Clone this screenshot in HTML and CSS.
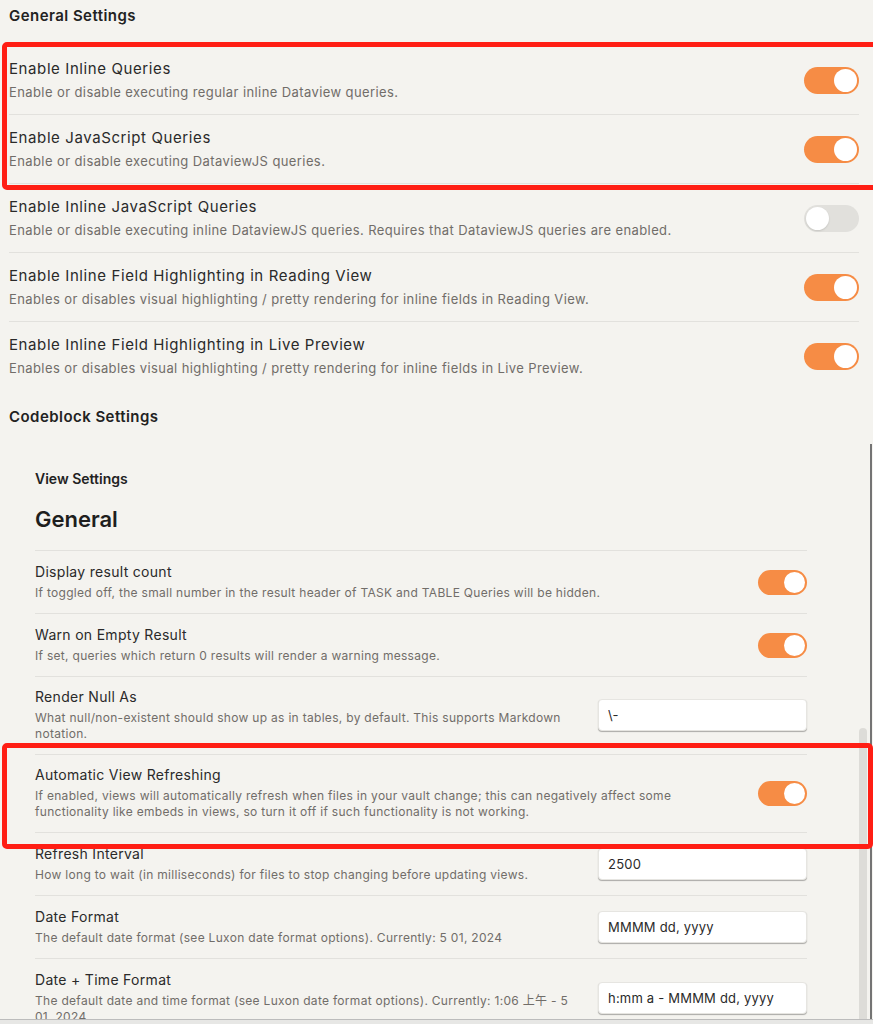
FILE: index.html
```html
<!DOCTYPE html>
<html lang="en">
<head>
<meta charset="utf-8">
<title>Dataview Settings</title>
<link rel="stylesheet" href="styles.css">
</head>
<body>
<div class="page">
  <section class="top">
    <div class="heading first">General Settings</div>
    <div class="list">
      <div class="item">
        <div class="info">
          <div class="name">Enable Inline Queries</div>
          <div class="desc">Enable or disable executing regular inline Dataview queries.</div>
        </div>
        <div class="control"><span class="toggle on"></span></div>
      </div>
      <div class="item">
        <div class="info">
          <div class="name">Enable JavaScript Queries</div>
          <div class="desc">Enable or disable executing DataviewJS queries.</div>
        </div>
        <div class="control"><span class="toggle on"></span></div>
      </div>
      <div class="item">
        <div class="info">
          <div class="name">Enable Inline JavaScript Queries</div>
          <div class="desc">Enable or disable executing inline DataviewJS queries. Requires that DataviewJS queries are enabled.</div>
        </div>
        <div class="control"><span class="toggle"></span></div>
      </div>
      <div class="item">
        <div class="info">
          <div class="name">Enable Inline Field Highlighting in Reading View</div>
          <div class="desc">Enables or disables visual highlighting / pretty rendering for inline fields in Reading View.</div>
        </div>
        <div class="control"><span class="toggle on"></span></div>
      </div>
      <div class="item">
        <div class="info">
          <div class="name">Enable Inline Field Highlighting in Live Preview</div>
          <div class="desc">Enables or disables visual highlighting / pretty rendering for inline fields in Live Preview.</div>
        </div>
        <div class="control"><span class="toggle on"></span></div>
      </div>
    </div>
    <div class="heading second">Codeblock Settings</div>
  </section>

  <section class="embed">
    <div class="embed-content">
      <div class="sub-heading">View Settings</div>
      <h2 class="big-heading">General</h2>
      <div class="list inner">
        <div class="item">
          <div class="info">
            <div class="name">Display result count</div>
            <div class="desc">If toggled off, the small number in the result header of TASK and TABLE Queries will be hidden.</div>
          </div>
          <div class="control"><span class="toggle on small"></span></div>
        </div>
        <div class="item">
          <div class="info">
            <div class="name">Warn on Empty Result</div>
            <div class="desc">If set, queries which return 0 results will render a warning message.</div>
          </div>
          <div class="control"><span class="toggle on small"></span></div>
        </div>
        <div class="item two-line">
          <div class="info">
            <div class="name">Render Null As</div>
            <div class="desc">What null/non-existent should show up as in tables, by default. This supports Markdown notation.</div>
          </div>
          <div class="control"><input class="text" type="text" value="\-"></div>
        </div>
        <div class="item two-line">
          <div class="info">
            <div class="name">Automatic View Refreshing</div>
            <div class="desc">If enabled, views will automatically refresh when files in your vault change; this can negatively affect some functionality like embeds in views, so turn it off if such functionality is not working.</div>
          </div>
          <div class="control"><span class="toggle on small"></span></div>
        </div>
        <div class="item">
          <div class="info">
            <div class="name">Refresh Interval</div>
            <div class="desc">How long to wait (in milliseconds) for files to stop changing before updating views.</div>
          </div>
          <div class="control"><input class="text" type="text" value="2500"></div>
        </div>
        <div class="item">
          <div class="info">
            <div class="name">Date Format</div>
            <div class="desc">The default date format (see Luxon date format options). Currently: 5 01, 2024</div>
          </div>
          <div class="control"><input class="text" type="text" value="MMMM dd, yyyy"></div>
        </div>
        <div class="item">
          <div class="info">
            <div class="name">Date + Time Format</div>
            <div class="desc">The default date and time format (see Luxon date format options). Currently: 1:06 上午 - 5 01, 2024</div>
          </div>
          <div class="control"><input class="text" type="text" value="h:mm a - MMMM dd, yyyy"></div>
        </div>
      </div>
    </div>
    <div class="scroll-gutter"><div class="thumb"></div></div>
  </section>
  <div class="footer"></div>

  <div class="mark mark-one"></div>
  <div class="mark mark-two"></div>
</div>
</body>
</html>
```

FILE: styles.css
```css
* { box-sizing: border-box; }

html, body {
  margin: 0;
  padding: 0;
  background: #f4f3ef;
}

body {
  font-family: Inter, "Noto Sans", "Noto Sans CJK SC", sans-serif;
  color: #262626;
  overflow: hidden;
}

.page {
  position: relative;
  width: 873px;
  height: 1024px;
  overflow: hidden;
}

.top {
  padding: 0 14px 0 9px;
}

.heading {
  font-size: 15px;
  font-weight: 600;
  line-height: 20px;
  letter-spacing: 0.45px;
  color: #222;
}

.heading.first { padding-top: 6px; }
.heading.second { margin-top: 17px; }

.list { margin-top: 20px; }

.item {
  display: flex;
  align-items: center;
  padding: 13px 0 13px;
  border-top: 1px solid #e2e1dd;
}

.top .item:first-child { border-top: none; }

.info {
  flex: 1 1 auto;
  min-width: 0;
  margin-right: 16px;
}

.name {
  font-size: 15px;
  line-height: 20px;
  letter-spacing: 0.6px;
  color: #2a2a2a;
}

.desc {
  margin-top: 4px;
  font-size: 13px;
  line-height: 18px;
  letter-spacing: 0.4px;
  color: #716d69;
}

.control {
  flex: 0 0 auto;
  display: flex;
  justify-content: flex-end;
}

.toggle {
  position: relative;
  display: block;
  width: 55px;
  height: 27px;
  border-radius: 14px;
  background: #e1e0dc;
}

.toggle::after {
  content: "";
  position: absolute;
  top: 2px;
  left: 2px;
  width: 23px;
  height: 23px;
  border-radius: 50%;
  background: #fff;
  box-shadow: 0 1px 2px rgba(0, 0, 0, 0.12);
}

.toggle.on { background: #f68c45; }
.toggle.on::after { left: auto; right: 2px; box-shadow: none; }

.toggle.small {
  width: 49px;
  height: 25px;
  border-radius: 13px;
}

.toggle.small::after {
  width: 21px;
  height: 21px;
}

/* Embedded view panel */
.embed {
  display: flex;
  height: 575px;
  margin-top: 17px;
  padding-left: 35px;
  border-right: 2px solid #747474;
  margin-right: 1px;
  overflow: hidden;
}

.embed-content {
  flex: 1 1 auto;
  min-width: 0;
  padding-top: 25px;
  margin-right: 52px;
}

.sub-heading {
  font-size: 14px;
  font-weight: 600;
  line-height: 20px;
  color: #222;
}

.big-heading {
  margin: 16px 0 0;
  font-size: 22px;
  font-weight: 600;
  line-height: 28px;
  color: #1e1e1e;
}

.list.inner { margin-top: 17px; }

.inner .item {
  padding: 12px 0;
}

.inner .item.two-line {
  padding: 11px 0 12px;
}

.inner .name {
  font-size: 14px;
  line-height: 18px;
  letter-spacing: 0.3px;
}

.inner .desc {
  font-size: 12px;
  line-height: 16px;
  letter-spacing: 0.3px;
}

.text {
  width: 209px;
  height: 32px;
  padding: 0 9px;
  border: 1px solid #e6e5e1;
  border-radius: 4px;
  background: #fff;
  box-shadow: 0 1px 1px rgba(0, 0, 0, 0.3);
  font-family: Inter, "Noto Sans", sans-serif;
  font-size: 13px;
  letter-spacing: 0.2px;
  color: #2a2a2a;
  outline: none;
}

.scroll-gutter {
  flex: 0 0 8px;
  width: 8px;
  margin-right: 3px;
  padding-top: 284px;
}

.thumb {
  height: 100%;
  border-radius: 4px 4px 0 0;
  background: #dddcd8;
}

.footer {
  height: 6px;
  border-top: 1px solid #bcbcbc;
  background: #e7e7e5;
}

/* Red annotation boxes drawn over the screenshot */
.mark {
  position: absolute;
  border: 5px solid #ff1e14;
  border-radius: 5px;
  pointer-events: none;
}

.mark-one {
  left: 2px;
  top: 42px;
  width: 885px;
  height: 148px;
}

.mark-two {
  left: 2px;
  top: 743px;
  width: 871px;
  height: 106px;
}
```
